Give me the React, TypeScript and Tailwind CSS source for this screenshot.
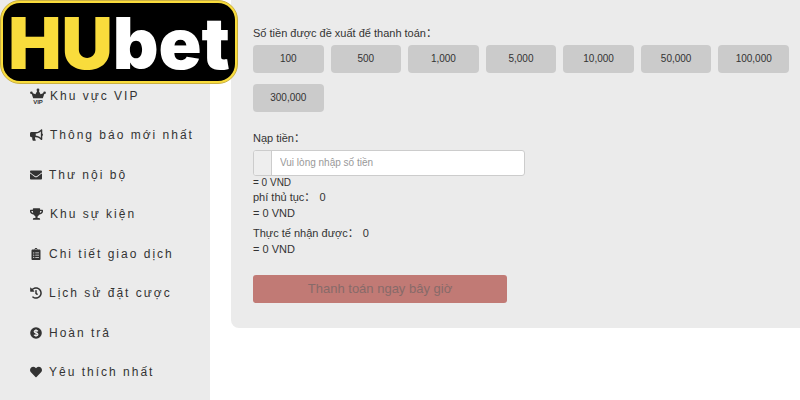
import React from 'react';
import { FaBullhorn, FaClipboardList, FaEnvelope, FaHeart, FaHistory, FaTrophy } from 'react-icons/fa';

const VipIcon = () => (
  <svg viewBox="0 0 16 16" className="w-4 h-4 tracking-normal" fill="currentColor" aria-hidden="true">
    <path d="M3.2 10.2 1.2 4.4 5.4 6.2 8 1.6 10.6 6.2l4.2-1.8-2 5.8z" />
    <circle cx="8" cy="1.9" r="1.4" />
    <circle cx="1.4" cy="4.7" r="1.3" />
    <circle cx="14.6" cy="4.7" r="1.3" />
    <text x="8" y="15.8" textAnchor="middle" fontSize="6" fontWeight="700">VIP</text>
  </svg>
);

const CoinIcon = () => (
  <svg viewBox="0 0 12 12" className="w-3 h-3" aria-hidden="true">
    <circle cx="6" cy="6" r="5.8" fill="currentColor" />
    <path d="M7.9 4.4C7.5 3.7 6.9 3.4 6 3.4c-1 0-1.8.5-1.8 1.2C4.2 6.3 7.9 5.6 7.9 7.4c0 .8-.8 1.3-1.9 1.3-.9 0-1.6-.3-2-1M6 2.2v7.6" fill="none" stroke="#ebebeb" strokeWidth="1.2" />
  </svg>
);

const menu = [
  { label: 'Khu vực VIP', icon: <VipIcon />, gap: 'gap-1' },
  { label: 'Thông báo mới nhất', icon: <FaBullhorn className="w-[13px] h-3" />, gap: 'gap-[7px]' },
  { label: 'Thư nội bộ', icon: <FaEnvelope className="w-3 h-3" />, gap: 'gap-[7px]' },
  { label: 'Khu sự kiện', icon: <FaTrophy className="w-[13px] h-3" />, gap: 'gap-[7px]' },
  { label: 'Chi tiết giao dịch', icon: <FaClipboardList className="w-3 h-3" />, gap: 'gap-[7px]' },
  { label: 'Lịch sử đặt cược', icon: <FaHistory className="w-3 h-3" />, gap: 'gap-[7px]' },
  { label: 'Hoàn trả', icon: <CoinIcon />, gap: 'gap-[7px]' },
  { label: 'Yêu thích nhất', icon: <FaHeart className="w-3 h-3" />, gap: 'gap-[7px]' },
];

const amounts = ['100', '500', '1,000', '5,000', '10,000', '50,000', '100,000', '300,000'];

const Logo = () => (
  <div className="absolute top-0 left-0 w-[238px] h-[84px] rounded-[20px] border border-[#c9b044] bg-[#f9dc3c] p-[2px]">
    <div className="flex items-center justify-center w-full h-full rounded-[17px] bg-black pt-[2px] font-['Inter',sans-serif] text-[71px] leading-[78px] font-black text-white">
      <span className="text-[#f9dc3c]">HU</span>bet
    </div>
  </div>
);

const Sidebar = () => (
  <aside className="flex flex-col w-[210px] shrink-0 bg-[#ebebeb] pt-[76px] pb-2">
    <nav className="flex flex-col flex-1">
      {menu.map(item => (
        <a
          key={item.label}
          href="#"
          className={`flex flex-1 items-center pl-[30px] min-h-9 text-xs leading-5 tracking-[2px] whitespace-nowrap ${item.gap}`}
        >
          {item.icon}
          {item.label}
        </a>
      ))}
    </nav>
  </aside>
);

const DepositForm = () => {
  const [amount, setAmount] = React.useState('');

  return (
    <main className="flex-1 min-w-0 self-start rounded-bl-lg bg-[#ebebeb] pt-[23px] pr-[11px] pb-[25px] pl-[22px] text-[11px] leading-4">
      <p className="leading-5">Số tiền được đề xuất để thanh toán：</p>
      <div className="grid grid-cols-7 gap-x-[7px] gap-y-[11px] mt-[2px]">
        {amounts.map(value => (
          <button
            key={value}
            type="button"
            onClick={() => setAmount(value)}
            className="h-7 rounded bg-[#cbcbcb] text-[10px]"
          >
            {value}
          </button>
        ))}
      </div>

      <label htmlFor="amount" className="block mt-4 leading-5">Nạp tiền：</label>
      <div className="flex w-[272px] h-[26px] mt-[2px] rounded-[3px] border border-[#cccccc] bg-white overflow-hidden">
        <span className="w-[18px] border-r border-[#cccccc] bg-[#eeeeee]" />
        <input
          id="amount"
          type="text"
          value={amount}
          onChange={e => setAmount(e.target.value)}
          placeholder="Vui lòng nhập số tiền"
          className="flex-1 min-w-0 px-2 text-[10px] outline-none placeholder:text-[#999999]"
        />
      </div>

      <p className="mt-[1px] text-[10px] leading-3">= 0 VND</p>
      <p>phí thủ tục：<span className="ml-1">0</span></p>
      <p>= 0 VND</p>
      <p className="mt-1">Thực tế nhận được：<span className="ml-1">0</span></p>
      <p>= 0 VND</p>

      <button
        type="submit"
        disabled
        className="block w-[254px] h-7 mt-[18px] rounded-[3px] bg-[#c17a75] text-[13px] text-[#876a69]"
      >
        Thanh toán ngay bây giờ
      </button>
    </main>
  );
};

export default function App() {
  return (
    <div className="relative flex gap-[21px] min-h-screen bg-white font-['Liberation_Sans','Noto_Sans_CJK_SC',sans-serif] text-[#333333]">
      <Sidebar />
      <DepositForm />
      <Logo />
    </div>
  );
}
